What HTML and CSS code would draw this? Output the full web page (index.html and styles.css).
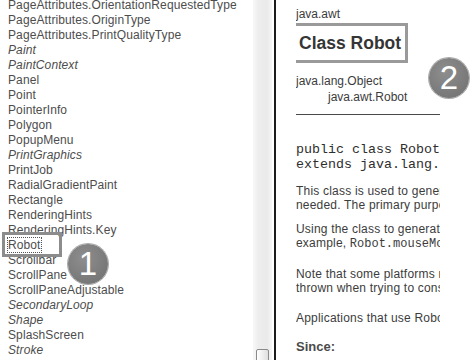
FILE: index.html
```html
<!DOCTYPE html>
<html lang="en">
<head>
  <meta charset="UTF-8">
  <title>Class Robot</title>
  <link rel="stylesheet" href="styles.css">
</head>
<body>
  <div class="list-pane">
    <ul class="class-list">
      <li>PageAttributes.OrientationRequestedType</li>
      <li>PageAttributes.OriginType</li>
      <li>PageAttributes.PrintQualityType</li>
      <li class="iface">Paint</li>
      <li class="iface">PaintContext</li>
      <li>Panel</li>
      <li>Point</li>
      <li>PointerInfo</li>
      <li>Polygon</li>
      <li>PopupMenu</li>
      <li class="iface">PrintGraphics</li>
      <li>PrintJob</li>
      <li>RadialGradientPaint</li>
      <li>Rectangle</li>
      <li>RenderingHints</li>
      <li>RenderingHints.Key</li>
      <li><span class="focused">Robot</span></li>
      <li>Scrollbar</li>
      <li>ScrollPane</li>
      <li>ScrollPaneAdjustable</li>
      <li class="iface">SecondaryLoop</li>
      <li class="iface">Shape</li>
      <li>SplashScreen</li>
      <li class="iface">Stroke</li>
    </ul>
    <div class="mark-box"></div>
    <div class="badge badge-one">1</div>
  </div>

  <div class="scrollbar">
    <div class="thumb"></div>
  </div>

  <div class="doc">
    <div class="doc-body">
      <div class="pkg">java.awt</div>
      <h2 class="title">Class Robot</h2>
      <div class="inherit">
        <div>java.lang.Object</div>
        <div class="sub">java.awt.Robot</div>
      </div>
      <hr>
      <pre class="sig">public class Robot
extends java.lang.Object</pre>
      <p class="lead">This class is used to generate native system input events for the purposes of test automation, self-running demos, and<br>needed. The primary purpose of Robot is to facilitate automated testing of Java platform implementations.</p>
      <p class="tight">Using the class to generate input events differs from posting events to the AWT event queue or AWT components in that the events are generated in the platform's native input queue. For<br>example, <code>Robot.mouseMove</code> will actually move the mouse cursor instead of just generating mouse move events.</p>
      <p>Note that some platforms require special privileges or extensions to access low-level input control. If the current platform configuration does not allow input control, an AWTException will be<br>thrown when trying to construct Robot objects.</p>
      <p>Applications that use Robot for purposes other than self-testing should handle these error conditions gracefully.</p>
      <div class="since">Since:</div>
    </div>
    <div class="badge badge-two">2</div>
  </div>
</body>
</html>
```

FILE: styles.css
```css
body {
  margin: 0;
  height: 360px;
  overflow: hidden;
  display: flex;
  background-color: #ffffff;
  font-family: "Liberation Sans", Arial, sans-serif;
  font-size: 12px;
}

.list-pane {
  position: relative;
  width: 253px;
  height: 360px;
  overflow: hidden;
}

.class-list {
  list-style: none;
  margin: -2px 0 0;
  padding: 0 0 0 8px;
  color: #4d4d4d;
  line-height: 15px;
  letter-spacing: 0.1px;
  white-space: nowrap;
}

.class-list .iface {
  font-style: italic;
}

.focused {
  outline: 1px dotted #555;
}

/* annotation overlays */
.mark-box {
  position: absolute;
  left: 2px;
  top: 232px;
  width: 54px;
  height: 19px;
  border: 3px solid #8c8c8c;
}

.badge {
  position: absolute;
  width: 40px;
  height: 40px;
  border-radius: 50%;
  background: radial-gradient(circle at 40% 35%, #8e8e8e, #787878 70%);
  box-shadow: 0 0 0 1px #aaaaaa;
  color: #ffffff;
  font-size: 33px;
  line-height: 40px;
  text-align: center;
}

.badge-one {
  left: 68px;
  top: 244px;
}

.badge-two {
  left: 153px;
  top: 58px;
}

.scrollbar {
  width: 19px;
  height: 360px;
  display: flex;
  flex-direction: column;
  justify-content: flex-end;
  align-items: center;
  background: linear-gradient(to right, #f8f8f8, #ededed 30%, #eaeaea 75%, #f6f6f6);
}

.thumb {
  width: 11px;
  height: 10px;
  margin-bottom: -1px;
  border: 1px solid #8a8a8a;
  border-radius: 2px 2px 0 0;
  background: linear-gradient(to right, #ffffff, #dedede);
}

.doc {
  position: relative;
  flex: 1;
  margin-left: 2px;
  border-left: 2px solid #1c1c1c;
  color: #3c3c3c;
}

.doc-body {
  width: 144px;
  margin-left: 20px;
  overflow: hidden;
  white-space: nowrap;
}

.pkg {
  margin-top: 7px;
  line-height: 15px;
}

.title {
  margin: 1px 0 0 -5px;
  width: 106px;
  height: 34px;
  border: 3px solid #9a9a9a;
  padding-left: 5px;
  font-size: 17.5px;
  line-height: 34px;
  color: #353535;
}

.inherit {
  margin-top: 10px;
  line-height: 16px;
}

.inherit .sub {
  padding-left: 32px;
}

hr {
  margin: 9px 0 0;
  border: 0;
  border-top: 1px solid #4a4a4a;
}

.sig {
  margin: 27px 0 0;
  font-family: "Liberation Mono", "Courier New", monospace;
  font-size: 13.33px;
  line-height: 15px;
  color: #2e2e2e;
}

p {
  margin: 16px 0 0;
  line-height: 14px;
  letter-spacing: 0.2px;
}

p.lead {
  margin-top: 12px;
}

p.tight {
  margin-top: 10px;
}

code {
  font-family: "Liberation Mono", "Courier New", monospace;
  font-size: 12px;
  letter-spacing: 0;
}

.since {
  margin-top: 14px;
  font-weight: bold;
  font-size: 13px;
  color: #4a4a4a;
}
```
